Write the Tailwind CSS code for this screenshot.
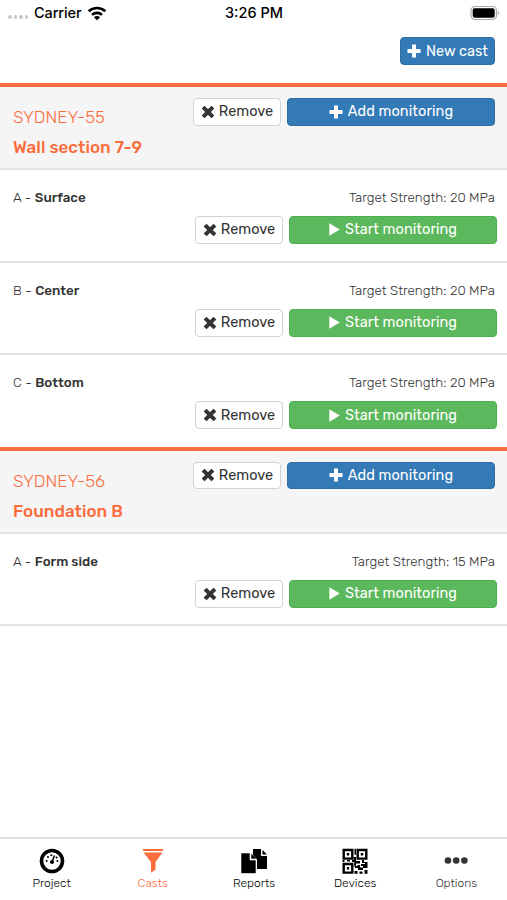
<!DOCTYPE html>
<html lang="en">
<head>
<meta charset="utf-8">
<title>Casts</title>
<script src="https://cdn.jsdelivr.net/npm/@tailwindcss/browser@4"></script>
</head>
<body class="bg-white font-['Rubik','Roboto',sans-serif] text-[#333]">
<svg class="hidden">
  <symbol id="plus" viewBox="0 0 14 14"><path d="M5 .5h4V5h4.500v4H9v4.500H5V9H.5V5H5z" fill="currentColor"/></symbol>
  <symbol id="cross" viewBox="0 0 12 12"><path d="M1.800 1.800 10.200 10.200M10.200 1.800 1.800 10.200" stroke="currentColor" stroke-width="3.500"/></symbol>
  <symbol id="play" viewBox="0 0 11 13"><path d="M.3.300 10.800 6.500.3 12.700z" fill="currentColor"/></symbol>
</svg>
<div class="flex h-[900px] w-[507px] flex-col overflow-hidden">
  <header class="grid h-[26px] shrink-0 grid-cols-3 items-center px-2 font-['Inter',sans-serif] text-[14.5px] font-medium text-black">
    <div class="flex items-center">
      <span class="flex gap-[2px] pt-2"><i class="size-[3.500px] rounded-full bg-[#c8c8c8]"></i><i class="size-[3.500px] rounded-full bg-[#c8c8c8]"></i><i class="size-[3.500px] rounded-full bg-[#c8c8c8]"></i><i class="size-[3.500px] rounded-full bg-[#c8c8c8]"></i></span>
      <span class="ml-[6px] tracking-[-0.1px]">Carrier</span>
      <svg class="ml-[5px] h-[15px] w-[20px]" viewBox="0 0 20 15" fill="none" stroke="#000" stroke-width="2.600"><path d="M1.700 5.300a12 12 0 0 1 16.600 0M5 8.900a7.200 7.200 0 0 1 10 0"/><path d="M10 14.300 6.900 11.200a4.400 4.400 0 0 1 6.200 0z" fill="#000" stroke="none"/></svg>
    </div>
    <span class="pl-px text-center">3:26 PM</span>
    <svg class="ml-auto h-[16px] w-[30px]" viewBox="0 0 30 16"><rect x="2" y="1.500" width="25.500" height="13" rx="4" fill="#fff" stroke="#aaa" stroke-width="1.200"/><rect x="3.700" y="3.200" width="22" height="9.600" rx="2"/><path d="M28.700 6v4a2.200 2.200 0 0 0 0-4" fill="#aaa"/></svg>
  </header>

  <div class="flex h-[57px] shrink-0 items-start justify-end pt-[11px] pr-3">
    <button class="flex h-[28px] w-[95px] items-center justify-center gap-[5px] rounded-[4px] border border-[#2e6da4] bg-[#337ab7] text-[14.500px] text-white"><svg class="size-[14px]"><use href="#plus"/></svg><span class="pt-px">New cast</span></button>
  </div>

  <main class="flex flex-1 flex-col">
    <section class="h-[363.500px] border-t-4 border-[#fa6c3c]">
      <div class="flex h-[83px] justify-between border-b-2 border-[#e3e3e3] bg-[#f5f5f5] pt-[11px] pr-3 pl-[13px] text-[#fa6c3c]">
        <div class="pt-[5px]"><div class="text-[17.200px] leading-[28px] font-light">SYDNEY-55</div><div class="mt-[2px] text-[17px] leading-[28px] font-medium tracking-[0.05px]">Wall section 7-9</div></div>
        <div class="flex gap-[6px]">
          <button class="flex h-[27.500px] w-[88px] items-center justify-center gap-[4px] rounded-[4px] border-[1.500px] border-[#d2d2d2] bg-white text-[14.500px] text-[#333]"><svg class="size-[14px]"><use href="#cross"/></svg><span class="pt-px">Remove</span></button>
          <button class="flex h-[27.500px] w-[208px] items-center justify-center gap-[5px] rounded-[4px] border border-[#2e6da4] bg-[#337ab7] text-[14.500px] tracking-[0.07px] text-white"><svg class="size-[14px]"><use href="#plus"/></svg><span class="pt-px">Add monitoring</span></button>
        </div>
      </div>
      <div class="h-[93px] border-b-2 border-[#e3e3e3] pt-[17px]">
        <div class="flex justify-between pr-[12px] pl-[13px] text-[13.400px] leading-5 font-light"><span>A - <b class="font-medium">Surface</b></span><span>Target Strength: 20 MPa</span></div>
        <div class="mt-[9px] flex justify-end gap-[6px] pr-[10px] text-[14.500px]"><button class="flex h-[27.500px] w-[88px] items-center justify-center gap-[4px] rounded-[4px] border-[1.500px] border-[#d2d2d2]"><svg class="size-[14px]"><use href="#cross"/></svg><span class="pt-px">Remove</span></button><button class="flex h-[27.500px] w-[208px] items-center justify-center gap-[5px] rounded-[4px] border border-[#4cae4c] bg-[#5cb85c] tracking-[0.05px] text-white"><svg class="h-[13px] w-[11px]"><use href="#play"/></svg><span class="pt-px">Start monitoring</span></button></div>
      </div>
      <div class="h-[92.300px] border-b-2 border-[#e3e3e3] pt-[17px]">
        <div class="flex justify-between pr-[12px] pl-[13px] text-[13.400px] leading-5 font-light"><span>B - <b class="font-medium">Center</b></span><span>Target Strength: 20 MPa</span></div>
        <div class="mt-[9px] flex justify-end gap-[6px] pr-[10px] text-[14.500px]"><button class="flex h-[27.500px] w-[88px] items-center justify-center gap-[4px] rounded-[4px] border-[1.500px] border-[#d2d2d2]"><svg class="size-[14px]"><use href="#cross"/></svg><span class="pt-px">Remove</span></button><button class="flex h-[27.500px] w-[208px] items-center justify-center gap-[5px] rounded-[4px] border border-[#4cae4c] bg-[#5cb85c] tracking-[0.05px] text-white"><svg class="h-[13px] w-[11px]"><use href="#play"/></svg><span class="pt-px">Start monitoring</span></button></div>
      </div>
      <div class="pt-[17px]">
        <div class="flex justify-between pr-[12px] pl-[13px] text-[13.400px] leading-5 font-light"><span>C - <b class="font-medium">Bottom</b></span><span>Target Strength: 20 MPa</span></div>
        <div class="mt-[9px] flex justify-end gap-[6px] pr-[10px] text-[14.500px]"><button class="flex h-[27.500px] w-[88px] items-center justify-center gap-[4px] rounded-[4px] border-[1.500px] border-[#d2d2d2]"><svg class="size-[14px]"><use href="#cross"/></svg><span class="pt-px">Remove</span></button><button class="flex h-[27.500px] w-[208px] items-center justify-center gap-[5px] rounded-[4px] border border-[#4cae4c] bg-[#5cb85c] tracking-[0.05px] text-white"><svg class="h-[13px] w-[11px]"><use href="#play"/></svg><span class="pt-px">Start monitoring</span></button></div>
      </div>
    </section>
    <section class="border-t-4 border-[#fa6c3c]">
      <div class="flex h-[83.500px] justify-between border-b-2 border-[#e3e3e3] bg-[#f5f5f5] pt-[11px] pr-3 pl-[13px] text-[#fa6c3c]">
        <div class="pt-[5px]"><div class="text-[17.200px] leading-[28px] font-light">SYDNEY-56</div><div class="mt-[2px] text-[17px] leading-[28px] font-medium tracking-[0.05px]">Foundation B</div></div>
        <div class="flex gap-[6px]">
          <button class="flex h-[27.500px] w-[88px] items-center justify-center gap-[4px] rounded-[4px] border-[1.500px] border-[#d2d2d2] bg-white text-[14.500px] text-[#333]"><svg class="size-[14px]"><use href="#cross"/></svg><span class="pt-px">Remove</span></button>
          <button class="flex h-[27.500px] w-[208px] items-center justify-center gap-[5px] rounded-[4px] border border-[#2e6da4] bg-[#337ab7] text-[14.500px] tracking-[0.07px] text-white"><svg class="size-[14px]"><use href="#plus"/></svg><span class="pt-px">Add monitoring</span></button>
        </div>
      </div>
      <div class="h-[92.300px] border-b-2 border-[#e3e3e3] pt-[17px]">
        <div class="flex justify-between pr-[12px] pl-[13px] text-[13.400px] leading-5 font-light"><span>A - <b class="font-medium">Form side</b></span><span>Target Strength: 15 MPa</span></div>
        <div class="mt-[9px] flex justify-end gap-[6px] pr-[10px] text-[14.500px]"><button class="flex h-[27.500px] w-[88px] items-center justify-center gap-[4px] rounded-[4px] border-[1.500px] border-[#d2d2d2]"><svg class="size-[14px]"><use href="#cross"/></svg><span class="pt-px">Remove</span></button><button class="flex h-[27.500px] w-[208px] items-center justify-center gap-[5px] rounded-[4px] border border-[#4cae4c] bg-[#5cb85c] tracking-[0.05px] text-white"><svg class="h-[13px] w-[11px]"><use href="#play"/></svg><span class="pt-px">Start monitoring</span></button></div>
      </div>
    </section>
  </main>

  <nav class="grid h-[63px] shrink-0 grid-cols-5 border-t-2 border-[#dfdfdf] pt-[9px] pl-px text-center text-[12px] leading-[16px] font-light text-black">
    <a class="flex flex-col items-center gap-px"><svg class="size-[26px]" viewBox="0 0 26 26"><circle cx="13" cy="13" r="10.500" fill="none" stroke="#000" stroke-width="3.600"/><circle cx="13" cy="14" r="2.100"/><path d="m13 14 2.500-6.500" stroke="#000" stroke-width="1.500"/><g><circle cx="7.600" cy="13" r="1"/><circle cx="9" cy="9" r="1"/><circle cx="12.400" cy="7.300" r="1"/><circle cx="17.600" cy="9.500" r="1"/><circle cx="18.400" cy="13" r="1"/></g></svg>Project</a>
    <a class="flex flex-col items-center gap-px text-[#fa6c3c]"><svg class="size-[26px]" viewBox="0 0 26 26" fill="currentColor"><path d="M3 1h20v2H3zM3.500 4.500h19L15.500 14v7.500L11 24.800V14z"/></svg>Casts</a>
    <a class="flex flex-col items-center gap-px"><svg class="size-[26px]" viewBox="0 0 26 26"><path d="M12 1h8v7h6v13H16v-9.500L12 7z"/><path d="M21.500 2v4.500H26z"/><path d="M0 5h9v7h6v13.500H0z" stroke="#fff" stroke-width=".6"/><path d="M10.300 5.500v5.200h4.800z"/></svg>Reports</a>
    <a class="flex flex-col items-center gap-px"><svg class="size-[26px]" viewBox="0 0 26 26"><g fill="none" stroke="#000" stroke-width="2.400"><path d="M1.700 2h8.600v8.600H1.700zM15.700 2h8.600v8.600h-8.600zM1.700 16h8.600v8.600H1.700z"/></g><path d="M4.800 5.100h2.400v2.400H4.800zM18.800 5.100h2.400v2.400h-2.400zM4.800 19.100h2.400v2.400H4.800zM12.500.8H14v6h-1.500zM11.500 9H14v4h4v2.500h-4v3h-1.800V14H10v-2h1.500zM20 12h2v2h3.500v6H21v-2h-2v-2h4v-1h-3zM15.500 17H18v2.500h3V22h-5v-2h-3v-2h2.500zM12.500 23h3v2.700h-3zM17.500 23.500h3v2.200h-3zM22.500 22h3v3.700h-3zM.5 12h2v2h-2zM5 12h3v1.500H5z"/></svg>Devices</a>
    <a class="flex flex-col items-center gap-px text-[#333]"><svg class="size-[26px]" viewBox="0 0 26 26" fill="currentColor"><circle cx="5" cy="12.500" r="3.300"/><circle cx="13.200" cy="12.500" r="3.300"/><circle cx="21.400" cy="12.500" r="3.300"/></svg>Options</a>
  </nav>
</div>
</body>
</html>
